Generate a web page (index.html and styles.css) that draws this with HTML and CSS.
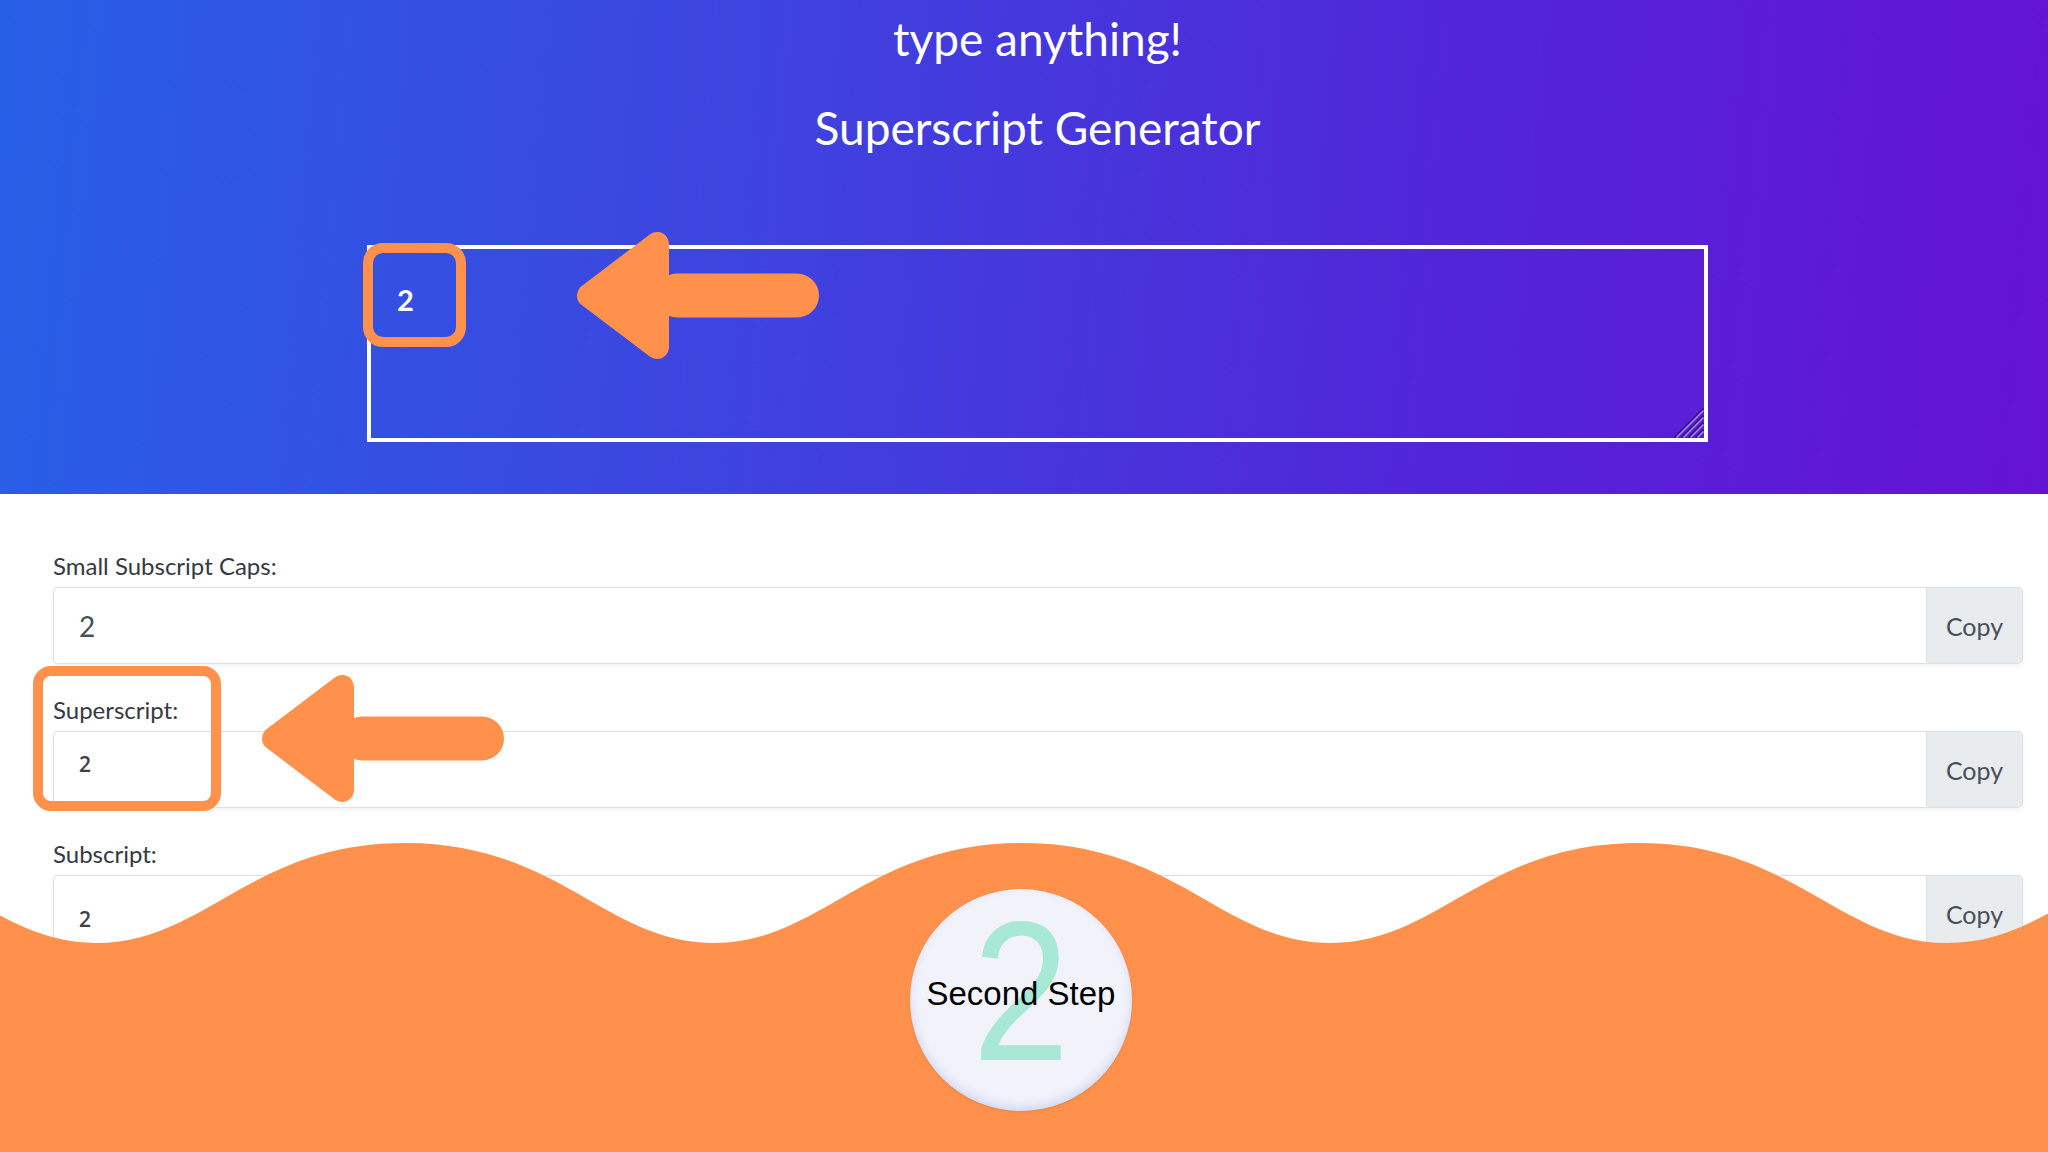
FILE: index.html
```html
<!DOCTYPE html>
<html lang="en">
<head>
<meta charset="utf-8">
<title>Superscript Generator</title>
<link rel="stylesheet" href="styles.css">
</head>
<body>
<div class="page">
  <header class="hero">
    <h2 class="hero-kicker">type anything!</h2>
    <h1 class="hero-title">Superscript Generator</h1>
    <div class="editor">
      <span class="editor-text">2</span>
      <svg class="grip" viewBox="0 0 32 32" width="32" height="32" aria-hidden="true">
        <g stroke-width="1.6" stroke-linecap="round">
          <line x1="31" y1="3" x2="3" y2="31" stroke="#2e0f73"/>
          <line x1="31" y1="5" x2="5" y2="31" stroke="#a88ae6"/>
          <line x1="31" y1="10" x2="10" y2="31" stroke="#2e0f73"/>
          <line x1="31" y1="12" x2="12" y2="31" stroke="#a88ae6"/>
          <line x1="31" y1="17" x2="17" y2="31" stroke="#2e0f73"/>
          <line x1="31" y1="19" x2="19" y2="31" stroke="#a88ae6"/>
          <line x1="31" y1="24" x2="24" y2="31" stroke="#2e0f73"/>
          <line x1="31" y1="26" x2="26" y2="31" stroke="#a88ae6"/>
        </g>
      </svg>
    </div>
    <div class="mark mark-editor"></div>
    <svg class="arrow arrow-editor" viewBox="0 0 242 127" width="242" height="127" aria-hidden="true">
      <line x1="100" y1="63.5" x2="220" y2="63.5" stroke="#ff914d" stroke-width="44" stroke-linecap="round"/>
      <polygon points="12,63.5 80,12 80,115" fill="#ff914d" stroke="#ff914d" stroke-width="24" stroke-linejoin="round"/>
    </svg>
  </header>

  <main class="fields">
    <div class="field">
      <label class="field-label">Small Subscript Caps:</label>
      <div class="input-group">
        <div class="input input-caps">2</div>
        <button class="copy" type="button">Copy</button>
      </div>
    </div>
    <div class="field">
      <label class="field-label">Superscript:</label>
      <div class="input-group">
        <div class="input input-script input-sup">2</div>
        <button class="copy" type="button">Copy</button>
      </div>
    </div>
    <div class="field">
      <label class="field-label">Subscript:</label>
      <div class="input-group">
        <div class="input input-script input-sub">2</div>
        <button class="copy" type="button">Copy</button>
      </div>
    </div>
    <div class="mark mark-field"></div>
    <svg class="arrow arrow-field" viewBox="0 0 242 127" width="242" height="127" aria-hidden="true">
      <line x1="100" y1="63.5" x2="220" y2="63.5" stroke="#ff914d" stroke-width="44" stroke-linecap="round"/>
      <polygon points="12,63.5 80,12 80,115" fill="#ff914d" stroke="#ff914d" stroke-width="24" stroke-linejoin="round"/>
    </svg>
  </main>

  <footer class="step">
    <svg class="wave" viewBox="0 0 2048 309" width="2048" height="309" preserveAspectRatio="none" aria-hidden="true">
      <path fill="#ff914d" d="M -520.5 100 C -412.5 100 -366.25 0 -212 0 C -57.75 0 -11.5 100 96.5 100 C 204.5 100 250.75 0 405 0 C 559.25 0 605.5 100 713.5 100 C 821.5 100 867.75 0 1022 0 C 1176.25 0 1222.5 100 1330.5 100 C 1438.5 100 1484.75 0 1639 0 C 1793.25 0 1839.5 100 1947.5 100 C 2055.5 100 2101.75 0 2256 0 L 2256 309 L -520.5 309 Z"/>
    </svg>
    <div class="badge">
      <span class="badge-num">2</span>
      <span class="badge-text">Second Step</span>
    </div>
  </footer>
</div>
</body>
</html>
```

FILE: styles.css
```css
* { box-sizing: border-box; }

html, body {
  margin: 0;
  padding: 0;
  background: #ffffff;
}

body {
  font-family: "Lato", "Open Sans", sans-serif;
}

.page {
  position: relative;
  width: 2048px;
  height: 1152px;
  overflow: hidden;
  background: #ffffff;
}

/* ---------- hero ---------- */
.hero {
  position: relative;
  height: 494px;
  padding: 11px 0 0 27px;
  text-align: center;
  color: #ffffff;
  background: linear-gradient(95deg, #275fe7 0%, #3d45df 35%, #5126d8 70%, #6513d3 100%);
}

.hero-kicker {
  margin: 0;
  font-weight: 400;
  font-size: 46px;
  line-height: 56px;
}

.hero-title {
  margin: 31px 0 0;
  font-weight: 400;
  font-size: 46px;
  line-height: 60px;
}

.editor {
  position: relative;
  width: 1341px;
  height: 197px;
  margin: 87px auto 0;
  border: 4px solid #ffffff;
  padding: 33px 0 0 26px;
  text-align: left;
}

.editor-text {
  display: block;
  font-weight: 700;
  font-size: 29px;
  line-height: 35px;
  color: #ffffff;
}

.grip {
  position: absolute;
  right: 0;
  bottom: 0;
  display: block;
}

/* ---------- annotations ---------- */
.mark {
  position: absolute;
  border: 10px solid #ff914d;
  border-radius: 20px;
}

.mark-editor {
  left: 363px;
  top: 243px;
  width: 103px;
  height: 104px;
}

.arrow {
  position: absolute;
  display: block;
}

.arrow-editor {
  left: 577px;
  top: 232px;
}

.mark-field {
  left: 33px;
  top: 172px;
  width: 188px;
  height: 145px;
  border-radius: 18px;
}

.arrow-field {
  left: 262px;
  top: 181px;
}

/* ---------- fields ---------- */
.fields {
  position: relative;
  display: flex;
  flex-direction: column;
  gap: 31px;
  padding: 57px 25px 0 53px;
}

.field {
  display: flex;
  flex-direction: column;
}

.field-label {
  display: block;
  margin-bottom: 6px;
  font-size: 24px;
  line-height: 30px;
  color: #343a40;
}

.input-group {
  display: flex;
  height: 77px;
  border-radius: 5px;
  box-shadow: 0 2px 5px rgba(0, 0, 0, 0.06);
}

.input {
  flex: 1;
  display: flex;
  align-items: center;
  padding-left: 25px;
  background: #ffffff;
  border: 1px solid #dde1e6;
  border-right: 0;
  border-radius: 5px 0 0 5px;
  font-size: 28px;
  color: #495057;
}

.input-script {
  align-items: flex-start;
  font-family: "Open Sans", "Liberation Sans", sans-serif;
  font-weight: 600;
  font-size: 21px;
  line-height: 21px;
  color: #3d4248;
}

.input-sup {
  padding-top: 22px;
}

.input-sub {
  padding-top: 33px;
}

.copy {
  width: 97px;
  padding: 0;
  background: #e9ecef;
  border: 1px solid #dde1e6;
  border-radius: 0 5px 5px 0;
  font-family: "Lato", "Open Sans", sans-serif;
  font-size: 25px;
  color: #495057;
}

/* ---------- footer step ---------- */
.step {
  position: absolute;
  left: 0;
  bottom: 0;
  width: 2048px;
  height: 309px;
  display: flex;
  justify-content: center;
  padding-top: 46px;
}

.wave {
  position: absolute;
  left: 0;
  top: 0;
  display: block;
}

.badge {
  position: relative;
  width: 222px;
  height: 222px;
  margin-right: 6px;
  padding-top: 4px;
  border-radius: 50%;
  background: #f1f2fa;
  box-shadow: inset 0 -4px 8px rgba(150, 170, 225, 0.35), 0 1px 3px rgba(120, 60, 20, 0.15);
  font-family: "Liberation Sans", Arial, sans-serif;
  text-align: center;
}

.badge-num {
  display: block;
  font-size: 198px;
  line-height: 198px;
  color: #a8e9d5;
  transform: scaleX(0.88);
}

.badge-text {
  position: absolute;
  left: 0;
  right: 0;
  top: 88px;
  font-size: 33px;
  line-height: 33px;
  color: #000000;
  white-space: nowrap;
}
```
